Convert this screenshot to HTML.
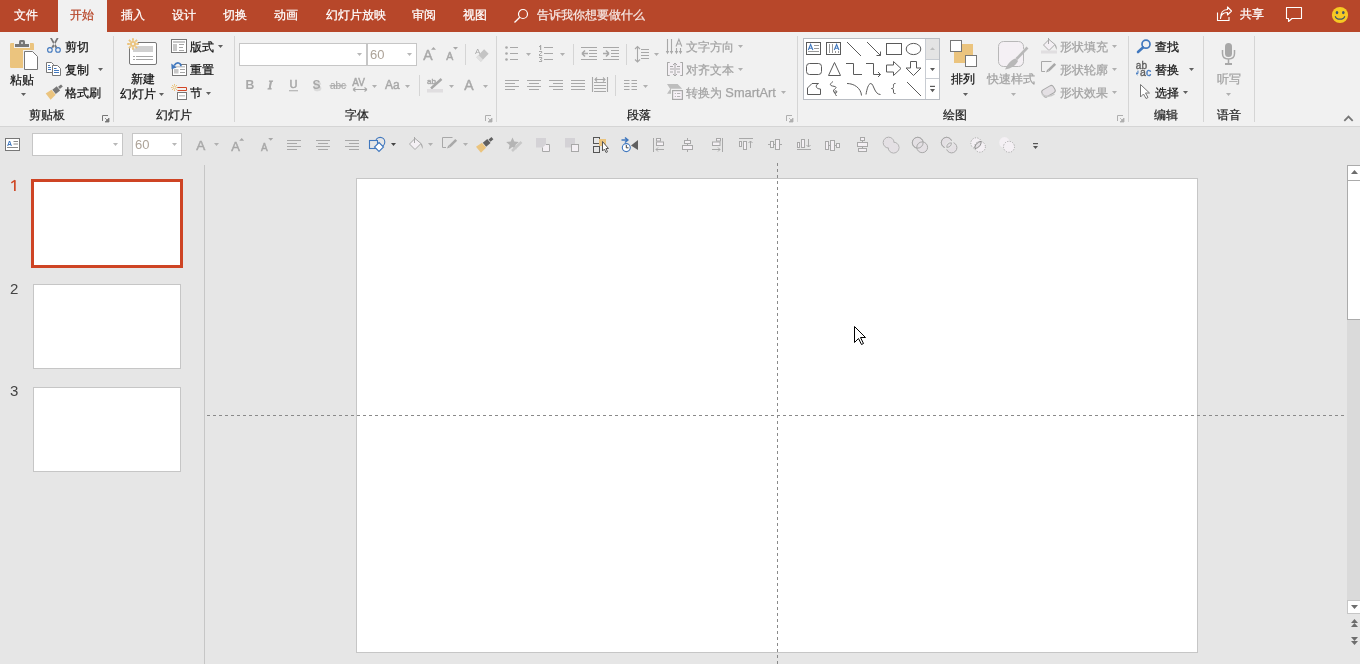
<!DOCTYPE html>
<html><head><meta charset="utf-8"><style>
html,body{margin:0;padding:0;width:1360px;height:664px;overflow:hidden;background:#E6E6E6;font-family:"Liberation Sans",sans-serif;}
.t{position:absolute;line-height:12px;white-space:nowrap;font-size:12px;font-weight:500;will-change:transform;-webkit-text-stroke-width:0.25px}
.r{position:absolute}
.s{position:absolute;overflow:visible}
</style></head><body>
<div class="r" style="left:0px;top:0px;width:1360px;height:32px;background:#B7472A;"></div>
<div class="r" style="left:58px;top:0px;width:49px;height:32px;background:#F1F1F1;"></div>
<div class="t" style="left:14px;top:9px;color:#FFFFFF;font-size:12px;">文件</div>
<div class="t" style="left:70px;top:9px;color:#B7472A;font-size:12px;">开始</div>
<div class="t" style="left:121px;top:9px;color:#FFFFFF;font-size:12px;">插入</div>
<div class="t" style="left:172px;top:9px;color:#FFFFFF;font-size:12px;">设计</div>
<div class="t" style="left:223px;top:9px;color:#FFFFFF;font-size:12px;">切换</div>
<div class="t" style="left:274px;top:9px;color:#FFFFFF;font-size:12px;">动画</div>
<div class="t" style="left:326px;top:9px;color:#FFFFFF;font-size:12px;">幻灯片放映</div>
<div class="t" style="left:412px;top:9px;color:#FFFFFF;font-size:12px;">审阅</div>
<div class="t" style="left:463px;top:9px;color:#FFFFFF;font-size:12px;">视图</div>
<div class="t" style="left:537px;top:9px;color:#F6E6E1;font-size:12px;">告诉我你想要做什么</div>
<svg class="s" style="left:513px;top:8px;" width="16" height="16" viewBox="0 0 16 16"><circle cx="10" cy="6" r="4.5" fill="none" stroke="#fff" stroke-width="1.2"/><path d="M6.8 9.2L1.5 14.5" stroke="#fff" stroke-width="1.3"/></svg>
<svg class="s" style="left:1216px;top:6px;" width="17" height="16" viewBox="0 0 17 16"><path d="M1.5 6.5V14.5H13V11" fill="none" stroke="#fff" stroke-width="1.1"/><path d="M4.5 12.5C5 8 8 6.5 11.5 6.5V9L15.5 5L11.5 1V3.5C7 3.5 4.5 7 4.5 12.5Z" fill="none" stroke="#fff" stroke-width="1.1" stroke-linejoin="round"/></svg>
<div class="t" style="left:1240px;top:8px;color:#FFFFFF;font-size:12px;">共享</div>
<svg class="s" style="left:1285px;top:6px;" width="18" height="17" viewBox="0 0 18 17"><path d="M1.5 1.5H16.5V12.5H7L3.5 15.5V12.5H1.5Z" fill="none" stroke="#fff" stroke-width="1.1" stroke-linejoin="round"/></svg>
<svg class="s" style="left:1331px;top:6px;" width="18" height="18" viewBox="0 0 18 18"><circle cx="9" cy="9" r="8.1" fill="#F6C923"/><ellipse cx="6" cy="6.6" rx="1.3" ry="1.7" fill="#3f5470"/><ellipse cx="12.3" cy="6.6" rx="1.3" ry="1.7" fill="#3f5470"/><path d="M4.2 10.2C5.5 14.2 12.5 14.2 13.8 10.2" fill="none" stroke="#3f5470" stroke-width="1.2"/></svg>
<div class="r" style="left:0px;top:32px;width:1360px;height:94px;background:#F1F1F1;"></div>
<div class="r" style="left:0px;top:126px;width:1360px;height:1px;background:#D5D5D5;"></div>
<div class="r" style="left:113px;top:36px;width:1px;height:86px;background:#D5D5D5;"></div>
<div class="r" style="left:234px;top:36px;width:1px;height:86px;background:#D5D5D5;"></div>
<div class="r" style="left:496px;top:36px;width:1px;height:86px;background:#D5D5D5;"></div>
<div class="r" style="left:797px;top:36px;width:1px;height:86px;background:#D5D5D5;"></div>
<div class="r" style="left:1128px;top:36px;width:1px;height:86px;background:#D5D5D5;"></div>
<div class="r" style="left:1203px;top:36px;width:1px;height:86px;background:#D5D5D5;"></div>
<div class="r" style="left:1254px;top:36px;width:1px;height:86px;background:#D5D5D5;"></div>
<div class="t" style="left:10px;top:74px;color:#141414;font-size:12px;">粘贴</div>
<svg class="s" style="left:21px;top:93px;" width="5" height="3" viewBox="0 0 5 3"><path d="M0 0H5L2.5 3Z" fill="#606060"/></svg>
<div class="t" style="left:65px;top:41px;color:#141414;font-size:12px;">剪切</div>
<div class="t" style="left:65px;top:64px;color:#141414;font-size:12px;">复制</div>
<svg class="s" style="left:98px;top:68px;" width="5" height="3" viewBox="0 0 5 3"><path d="M0 0H5L2.5 3Z" fill="#606060"/></svg>
<div class="t" style="left:65px;top:87px;color:#141414;font-size:12px;">格式刷</div>
<div class="t" style="left:29px;top:109px;color:#262626;font-size:12px;">剪贴板</div>
<div class="t" style="left:131px;top:73px;color:#141414;font-size:12px;">新建</div>
<div class="t" style="left:120px;top:88px;color:#141414;font-size:12px;">幻灯片</div>
<svg class="s" style="left:159px;top:93px;" width="5" height="3" viewBox="0 0 5 3"><path d="M0 0H5L2.5 3Z" fill="#606060"/></svg>
<div class="t" style="left:190px;top:41px;color:#141414;font-size:12px;">版式</div>
<svg class="s" style="left:218px;top:45px;" width="5" height="3" viewBox="0 0 5 3"><path d="M0 0H5L2.5 3Z" fill="#606060"/></svg>
<div class="t" style="left:190px;top:64px;color:#141414;font-size:12px;">重置</div>
<div class="t" style="left:190px;top:87px;color:#141414;font-size:12px;">节</div>
<svg class="s" style="left:206px;top:92px;" width="5" height="3" viewBox="0 0 5 3"><path d="M0 0H5L2.5 3Z" fill="#606060"/></svg>
<div class="t" style="left:156px;top:109px;color:#262626;font-size:12px;">幻灯片</div>
<div class="r" style="left:239px;top:43px;width:128px;height:23px;background:#FFFFFF;box-sizing:border-box;border:1px solid #C6C6C6"></div>
<div class="r" style="left:367px;top:43px;width:50px;height:23px;background:#FFFFFF;box-sizing:border-box;border:1px solid #C6C6C6"></div>
<svg class="s" style="left:357px;top:53px;" width="5" height="3" viewBox="0 0 5 3"><path d="M0 0H5L2.5 3Z" fill="#B8B8B8"/></svg>
<svg class="s" style="left:407px;top:53px;" width="5" height="3" viewBox="0 0 5 3"><path d="M0 0H5L2.5 3Z" fill="#B8B8B8"/></svg>
<div class="t" style="left:370px;top:49px;color:#ADA398;font-size:13px;-webkit-text-stroke-width:0">60</div>
<div class="t" style="left:345px;top:109px;color:#262626;font-size:12px;">字体</div>
<div class="t" style="left:627px;top:109px;color:#262626;font-size:12px;">段落</div>
<div class="t" style="left:686px;top:41px;color:#A3A3A3;font-size:12px;">文字方向</div>
<svg class="s" style="left:738px;top:45px;" width="5" height="3" viewBox="0 0 5 3"><path d="M0 0H5L2.5 3Z" fill="#B0B0B0"/></svg>
<div class="t" style="left:686px;top:64px;color:#A3A3A3;font-size:12px;">对齐文本</div>
<svg class="s" style="left:738px;top:68px;" width="5" height="3" viewBox="0 0 5 3"><path d="M0 0H5L2.5 3Z" fill="#B0B0B0"/></svg>
<div class="t" style="left:686px;top:87px;color:#A3A3A3;font-size:12px;">转换为 <span style="font-size:12.8px">SmartArt</span></div>
<svg class="s" style="left:781px;top:91px;" width="5" height="3" viewBox="0 0 5 3"><path d="M0 0H5L2.5 3Z" fill="#B0B0B0"/></svg>
<div class="r" style="left:803px;top:38px;width:137px;height:62px;background:#FFFFFF;box-sizing:border-box;border:1px solid #B9BDC3"></div>
<div class="t" style="left:951px;top:73px;color:#141414;font-size:12px;">排列</div>
<svg class="s" style="left:963px;top:93px;" width="5" height="3" viewBox="0 0 5 3"><path d="M0 0H5L2.5 3Z" fill="#606060"/></svg>
<div class="t" style="left:987px;top:73px;color:#A3A3A3;font-size:12px;">快速样式</div>
<svg class="s" style="left:1011px;top:93px;" width="5" height="3" viewBox="0 0 5 3"><path d="M0 0H5L2.5 3Z" fill="#B0B0B0"/></svg>
<div class="t" style="left:1060px;top:41px;color:#A3A3A3;font-size:12px;">形状填充</div>
<svg class="s" style="left:1112px;top:45px;" width="5" height="3" viewBox="0 0 5 3"><path d="M0 0H5L2.5 3Z" fill="#B0B0B0"/></svg>
<div class="t" style="left:1060px;top:64px;color:#A3A3A3;font-size:12px;">形状轮廓</div>
<svg class="s" style="left:1112px;top:68px;" width="5" height="3" viewBox="0 0 5 3"><path d="M0 0H5L2.5 3Z" fill="#B0B0B0"/></svg>
<div class="t" style="left:1060px;top:87px;color:#A3A3A3;font-size:12px;">形状效果</div>
<svg class="s" style="left:1112px;top:91px;" width="5" height="3" viewBox="0 0 5 3"><path d="M0 0H5L2.5 3Z" fill="#B0B0B0"/></svg>
<div class="t" style="left:943px;top:109px;color:#262626;font-size:12px;">绘图</div>
<div class="t" style="left:1155px;top:41px;color:#141414;font-size:12px;">查找</div>
<div class="t" style="left:1155px;top:64px;color:#141414;font-size:12px;">替换</div>
<svg class="s" style="left:1189px;top:68px;" width="5" height="3" viewBox="0 0 5 3"><path d="M0 0H5L2.5 3Z" fill="#606060"/></svg>
<div class="t" style="left:1155px;top:87px;color:#141414;font-size:12px;">选择</div>
<svg class="s" style="left:1183px;top:91px;" width="5" height="3" viewBox="0 0 5 3"><path d="M0 0H5L2.5 3Z" fill="#606060"/></svg>
<div class="t" style="left:1154px;top:109px;color:#262626;font-size:12px;">编辑</div>
<div class="t" style="left:1217px;top:73px;color:#A3A3A3;font-size:12px;">听写</div>
<svg class="s" style="left:1226px;top:93px;" width="5" height="3" viewBox="0 0 5 3"><path d="M0 0H5L2.5 3Z" fill="#B0B0B0"/></svg>
<div class="t" style="left:1217px;top:109px;color:#262626;font-size:12px;">语音</div>
<div class="r" style="left:465px;top:44px;width:1px;height:21px;background:#D5D5D5;"></div>
<div class="r" style="left:419px;top:75px;width:1px;height:21px;background:#D5D5D5;"></div>
<div class="r" style="left:573px;top:44px;width:1px;height:21px;background:#D5D5D5;"></div>
<div class="r" style="left:626px;top:44px;width:1px;height:21px;background:#D5D5D5;"></div>
<div class="r" style="left:615px;top:75px;width:1px;height:21px;background:#D5D5D5;"></div>
<svg class="s" style="left:372px;top:85px;" width="5" height="3" viewBox="0 0 5 3"><path d="M0 0H5L2.5 3Z" fill="#B0B0B0"/></svg>
<svg class="s" style="left:405px;top:85px;" width="5" height="3" viewBox="0 0 5 3"><path d="M0 0H5L2.5 3Z" fill="#B0B0B0"/></svg>
<svg class="s" style="left:449px;top:85px;" width="5" height="3" viewBox="0 0 5 3"><path d="M0 0H5L2.5 3Z" fill="#B0B0B0"/></svg>
<svg class="s" style="left:483px;top:85px;" width="5" height="3" viewBox="0 0 5 3"><path d="M0 0H5L2.5 3Z" fill="#B0B0B0"/></svg>
<svg class="s" style="left:526px;top:53px;" width="5" height="3" viewBox="0 0 5 3"><path d="M0 0H5L2.5 3Z" fill="#B0B0B0"/></svg>
<svg class="s" style="left:560px;top:53px;" width="5" height="3" viewBox="0 0 5 3"><path d="M0 0H5L2.5 3Z" fill="#B0B0B0"/></svg>
<svg class="s" style="left:654px;top:53px;" width="5" height="3" viewBox="0 0 5 3"><path d="M0 0H5L2.5 3Z" fill="#B0B0B0"/></svg>
<svg class="s" style="left:643px;top:85px;" width="5" height="3" viewBox="0 0 5 3"><path d="M0 0H5L2.5 3Z" fill="#B0B0B0"/></svg>
<svg class="s" style="left:0;top:0" width="1360" height="166" viewBox="0 0 1360 166"><rect x="10" y="43" width="24" height="25" rx="1.2" fill="#EBC47E"/><rect x="14" y="43" width="16" height="5" fill="#F1F1F1"/><rect x="15" y="44" width="14" height="3" fill="#777777"/><rect x="19" y="40" width="6" height="5" rx="1.5" fill="#777777"/><circle cx="22" cy="43" r="0.9" fill="#F1F1F1"/><rect x="23" y="50" width="16" height="21" fill="#F1F1F1"/><path d="M24.5 51.5H32.5L37.5 56.5V69.5H24.5Z" fill="#fff" stroke="#777777" stroke-width="1"/><path d="M50 38L51.9 38L57.4 47.6L55.4 47.9ZM58.6 38L56.7 38L51.2 47.6L53.2 47.9Z" fill="#777777"/><circle cx="49.9" cy="49.9" r="2.3" fill="#F1F1F1" stroke="#4178BE" stroke-width="1.1"/><circle cx="58" cy="49.9" r="2.3" fill="#F1F1F1" stroke="#4178BE" stroke-width="1.1"/><path d="M46.5 62.5H51.5L53.5 64.5V72.5H46.5Z" fill="#fff" stroke="#777777"/><path d="M48 65.5H50M48 67.5H51M48 69.5H51" stroke="#4178BE"/><path d="M52.5 65.5H57.5L60.5 68.5V75.5H52.5Z" fill="#fff" stroke="#777777"/><path d="M54 68.5H56.5M54 70.5H59M54 72.5H59" stroke="#4178BE"/><g transform="translate(53.6 92.2) rotate(-39)"><path d="M-7 -3.9L0 -3.3V3.3L-7 3.9Z" fill="#EBC47E"/><rect x="0.6" y="-2.7" width="5.6" height="5.4" fill="#777777"/><rect x="6.9" y="-1.4" width="3.8" height="2.8" fill="#777777"/></g><path d="M102.5 121V115.5H108" fill="none" stroke="#777777" stroke-width="1"/><path d="M105 118L108 121M109 118V122H105Z" fill="#777777" stroke="#777777" stroke-width="0.8"/><path d="M485.5 121V115.5H491" fill="none" stroke="#AFAFAF" stroke-width="1"/><path d="M488 118L491 121M492 118V122H488Z" fill="#AFAFAF" stroke="#AFAFAF" stroke-width="0.8"/><path d="M786.5 121V115.5H792" fill="none" stroke="#AFAFAF" stroke-width="1"/><path d="M789 118L792 121M793 118V122H789Z" fill="#AFAFAF" stroke="#AFAFAF" stroke-width="0.8"/><path d="M1117.5 121V115.5H1123" fill="none" stroke="#AFAFAF" stroke-width="1"/><path d="M1120 118L1123 121M1124 118V122H1120Z" fill="#AFAFAF" stroke="#AFAFAF" stroke-width="0.8"/><rect x="129.5" y="42.5" width="27" height="22" rx="1.5" fill="#fff" stroke="#777777"/><rect x="133" y="46" width="20" height="6" fill="#D0D0D0"/><path d="M133 56.5H135M136 56.5H153M133 59.5H135M136 59.5H153" stroke="#A6A6A6"/><circle cx="133" cy="44" r="5" fill="#F1F1F1"/><g stroke="#EBC47E" stroke-width="1.9" fill="none"><circle cx="133" cy="44" r="2.1"/><path d="M133 38.2V40.8M133 47.2V49.8M127.2 44H129.8M136.2 44H138.8M128.9 39.9L130.7 41.7M135.3 46.3L137.1 48.1M137.1 39.9L135.3 41.7M130.7 46.3L128.9 48.1"/></g><rect x="171.5" y="39.5" width="15" height="13" fill="#fff" stroke="#777777"/><rect x="173" y="41" width="12" height="2" fill="#C8C8C8"/><rect x="173" y="44" width="4" height="7" fill="#C8C8C8"/><path d="M179 44.5H184M179 47.5H183M179 50.5H184" stroke="#A6A6A6"/><rect x="172.5" y="64.5" width="14" height="11" fill="#fff" stroke="#777777"/><rect x="174" y="66" width="11" height="1.5" fill="#C8C8C8"/><rect x="174" y="69" width="4.5" height="4.5" fill="#C8C8C8"/><path d="M180 69.5H185M180 72.5H185" stroke="#A6A6A6"/><path d="M171 61H181V66H171Z" fill="#F1F1F1"/><path d="M181 66.2C180.8 62.6 176.8 61.6 174.2 65.4" fill="none" stroke="#4178BE" stroke-width="1.7"/><path d="M171.3 63.6L171.6 69.2L176.6 67.4Z" fill="#4178BE"/><g stroke="#EBC47E" stroke-width="1" fill="none"><circle cx="174.5" cy="87.5" r="1.4"/><path d="M174.5 84V85.5M174.5 89.5V91M171 87.5H172.5M176.5 87.5H178M172 85L173 86M176 89L177 90M177 85L176 86M173 89L172 90"/></g><path d="M177.5 87.5H186.5V90.5H177.5" fill="none" stroke="#D24726"/><rect x="177.5" y="92.5" width="9" height="7" fill="#fff" stroke="#777777"/><rect x="179" y="95" width="6" height="1.5" fill="#C8C8C8"/><g fill="#A8A8A8" stroke="#A8A8A8" stroke-width="0.45" font-family="Liberation Sans" ><text x="423.3" y="60" font-size="14">A</text><text x="446.2" y="60" font-size="10.5">A</text><text x="245.5" y="89" font-size="12.2" font-weight="bold" stroke-width="0">B</text><text x="268" y="89" font-size="12.5" font-family="Liberation Serif" font-style="italic" stroke-width="0.8">I</text><text x="289.6" y="88" font-size="11" stroke-width="0.5">U</text><text x="313.4" y="90.6" font-size="12" font-weight="bold" fill="#DADADA" stroke="#DADADA" stroke-width="0.6">S</text><text x="312.4" y="89" font-size="12" font-weight="bold" stroke-width="0">S</text><text x="330" y="89" font-size="10" stroke-width="0.15">abc</text><text x="352.3" y="86" font-size="10">AV</text><text x="385" y="89" font-size="12">Aa</text><text x="427" y="84" font-size="8">ab</text><text x="464.2" y="90" font-size="14">A</text></g><path d="M431 49.8L433.5 47L436 49.8Z M453 47H458L455.5 49.8Z" fill="#A8A8A8"/><path d="M289 90.8H298M329.5 85.8H346.5" stroke="#A8A8A8" stroke-width="1.1"/><path d="M353 89.5H367M353 89.5L355.5 87.5M353 89.5L355.5 91.5M367 89.5L364.5 87.5M367 89.5L364.5 91.5" stroke="#A8A8A8" fill="none" stroke-width="1.1"/><text x="475" y="54" font-size="8" fill="#A8A8A8" font-family="Liberation Sans">A</text><g transform="translate(482.5 55.5) rotate(-45)"><rect x="-5.5" y="-3.2" width="11" height="6.4" fill="#C4C4C4"/><rect x="-5.5" y="-3.2" width="3" height="6.4" fill="#E0E0E0"/></g><path d="M431 88.5L441.5 79" stroke="#A8A8A8" stroke-width="2.4"/><rect x="427" y="89" width="16" height="3.5" fill="#E0DEE0"/><path d="M465.5 90.5H474.5" stroke="#E0DEE0" stroke-width="0"/><g fill="#A8A8A8"><circle cx="506.5" cy="47.5" r="1.3"/><circle cx="506.5" cy="53.5" r="1.3"/><circle cx="506.5" cy="59.5" r="1.3"/></g><path d="M510 47.5H518M510 53.5H518M510 59.5H518M544 47.5H553M544 53.5H553M544 59.5H553" stroke="#A8A8A8" stroke-width="1.2"/><path d="M540 45h1.2v5H540zM539 46h1v1h-1zM539 51h3v1h-3zM541.2 51.5h1v1.5h-1zM540.2 53h1v1h-1zM539 54h1v1h-1zM539 55h3.2v1H539zM539 57h3v1h-3zM541.2 57.5h1v1.5h-1zM540 59h1.5v1H540zM541.2 60h1v1.2h-1zM539 61h3v1h-3z" fill="#A8A8A8"/><path d="M581 47.5H597M589 50.5H597M589 53.5H597M589 56.5H597M581 59.5H597" stroke="#A8A8A8" stroke-width="1.1"/><path d="M582 53.5H588M582 53.5L585 50.5M582 53.5L585 56.5" stroke="#A8A8A8" stroke-width="1.6" fill="none"/><path d="M603 47.5H619M611 50.5H619M611 53.5H619M611 56.5H619M603 59.5H619" stroke="#A8A8A8" stroke-width="1.1"/><path d="M603 53.5H609M609 53.5L606 50.5M609 53.5L606 56.5" stroke="#A8A8A8" stroke-width="1.6" fill="none"/><path d="M637.5 46.5V62M635 49L637.5 46.5L640 49M635 59.5L637.5 62L640 59.5" stroke="#A8A8A8" stroke-width="1.1" fill="none"/><path d="M641 49.5H649M641 52.5H649M641 55.5H649M641 58.5H649" stroke="#A8A8A8" stroke-width="1.1"/><path d="M505 80.5H519M505 83.5H515M505 86.5H519M505 89.5H515" stroke="#A8A8A8" stroke-width="1.1"/><path d="M527 80.5H541M529 83.5H539M527 86.5H541M529 89.5H539" stroke="#A8A8A8" stroke-width="1.1"/><path d="M549 80.5H563M553 83.5H563M549 86.5H563M553 89.5H563" stroke="#A8A8A8" stroke-width="1.1"/><path d="M571 80.5H585M571 83.5H585M571 86.5H585M571 89.5H585" stroke="#A8A8A8" stroke-width="1.1"/><path d="M592.5 77V92M607.5 77V92M594 82.5H606M594 85.5H606M594 88.5H606M594 91.5H606" stroke="#A8A8A8" stroke-width="1.1"/><path d="M595 79.5H605M597 77.5L595 79.5L597 81.5M603 77.5L605 79.5L603 81.5" stroke="#A8A8A8" stroke-width="1.1" fill="none"/><path d="M624 80.5H629.5M631.5 80.5H637M624 83.5H629.5M631.5 83.5H637M624 86.5H629.5M631.5 86.5H637M624 89.5H629.5M631.5 89.5H637" stroke="#A8A8A8" stroke-width="1.1"/><path d="M667.5 39V53M671.5 39V53M676.5 48V53M680.5 48V53" stroke="#A8A8A8" stroke-width="1.1"/><path d="M665.8 51L667.5 54.2L669.2 51ZM669.8 51L671.5 54.2L673.2 51ZM674.8 51L676.5 54.2L678.2 51ZM678.8 51L680.5 54.2L682.2 51Z" fill="#A8A8A8"/><path d="M676 46.5L678.9 39.2L681.8 46.5M677 44H680.8" fill="none" stroke="#A8A8A8" stroke-width="1.1"/><path d="M669.5 62.5H667.5V75.5H669.5M680.5 62.5H682.5V75.5H680.5" stroke="#A8A8A8" fill="none"/><rect x="668" y="63" width="14" height="12" fill="#F4F0F4"/><path d="M669.5 62.5H667.5V75.5H669.5M680.5 62.5H682.5V75.5H680.5" stroke="#A8A8A8" fill="none"/><path d="M675 63V68M675 70V76M673 65L675 63L677 65M673 74L675 76L677 74M670 69H680M670 66.5H673M677 66.5H680M670 72H673M677 72H680" stroke="#A8A8A8" fill="none"/><path d="M667 84H677.6L682.2 88.8H671V93.8H667L670.2 89Z" fill="#BEBEBE"/><rect x="671" y="89" width="13" height="12" fill="#F1F1F1"/><rect x="672.6" y="90.6" width="9.8" height="8.8" fill="#F6F0F6" stroke="#A8A8A8" stroke-width="1.2"/><path d="M674.8 93.5H675.9M677 93.5H680.3M674.8 96.5H675.9M677 96.5H680.3" stroke="#B4B4B4" stroke-width="1"/><rect x="925" y="39" width="14" height="20" fill="#E4E4E4"/><path d="M925.5 39V99M925 59.5H939M925 78.5H939" stroke="#C8CCD2" stroke-width="1"/><path d="M930 50H935L932.5 47.3Z" fill="#BDBDBD"/><path d="M930 68H935L932.5 71Z M930 89H935L932.5 92.3Z" fill="#5a5a5a"/><rect x="930" y="85.8" width="5" height="1.2" fill="#5a5a5a"/><rect x="806.5" y="42.5" width="14" height="12" fill="none" stroke="#5a5a5a" stroke-width="1"/><path d="M808.3 50L810.6 44.5L812.9 50M809.2 48.2H812" fill="none" stroke="#4178BE" stroke-width="1.1"/><path d="M814 45.5H819M814 48.5H819M808 51.5H819" stroke="#9a9a9a"/><rect x="826.5" y="42.5" width="14" height="12" fill="none" stroke="#5a5a5a" stroke-width="1"/><path d="M829.5 44V53M832.5 44V53M835.5 51V53M838.5 51V53" stroke="#9a9a9a"/><path d="M834.3 50L836.6 44.5L838.9 50M835.2 48.2H838" fill="none" stroke="#4178BE" stroke-width="1.1"/><path d="M847 42L861 56" fill="none" stroke="#5a5a5a" stroke-width="1"/><path d="M867 42L880.5 55.5M876.5 55.5H880.5V51.5" fill="none" stroke="#5a5a5a" stroke-width="1"/><rect x="886.5" y="43.5" width="15" height="11" fill="none" stroke="#5a5a5a" stroke-width="1"/><ellipse cx="913.5" cy="49" rx="7.3" ry="5.6" fill="none" stroke="#5a5a5a" stroke-width="1"/><rect x="806.5" y="63.5" width="15" height="11" rx="3" fill="none" stroke="#5a5a5a" stroke-width="1"/><path d="M834.5 62.5L828.5 75.5H840.5Z" fill="none" stroke="#5a5a5a" stroke-width="1"/><path d="M846 63.5H853.5V74.5H862" fill="none" stroke="#5a5a5a" stroke-width="1"/><path d="M866 63.5H873.5V74.5H880.5M878 72L880.5 74.5L878 77" fill="none" stroke="#5a5a5a" stroke-width="1"/><path d="M886.5 65H893.5V61.5L901 68.5L893.5 75.5V72H886.5Z" fill="none" stroke="#5a5a5a" stroke-width="1"/><path d="M910.5 61.5H916.5V68H921L913.5 75.5L906 68H910.5Z" fill="none" stroke="#5a5a5a" stroke-width="1"/><path d="M807.5 94.5V88L812 83.5H818.5C815 85 815.5 89 820.5 89V94.5Z" fill="none" stroke="#5a5a5a" stroke-width="1" stroke-linejoin="round"/><path d="M833 81.5C831 83 829.5 84.5 831 85.5C832.5 86.5 836 86 836 87.5C836 89 833 89 833.5 91.5C834 93.5 837 93.5 836.8 91.8C836.6 90 834.5 90.5 834.8 92.5C835 94 836 95 836.5 96" fill="none" stroke="#5a5a5a" stroke-width="1"/><path d="M847 83.5C854 83.5 861 88 861.5 95.5" fill="none" stroke="#5a5a5a" stroke-width="1"/><path d="M866 94.5C866.8 89.5 868.3 83.5 870.8 83.5C873.8 83.5 874.2 94.5 880.5 94.5" fill="none" stroke="#5a5a5a" stroke-width="1"/><path d="M895.5 83.5C893 83.5 893.5 84.5 893.5 86.5C893.5 88 893 88.5 891.5 88.5C893 88.5 893.5 89 893.5 91C893.5 93 893 93.5 895.5 93.5" fill="none" stroke="#5a5a5a" stroke-width="1"/><path d="M907 82L921 96" fill="none" stroke="#5a5a5a" stroke-width="1"/><rect x="954" y="44" width="19" height="19" fill="#EBC47E"/><rect x="950.5" y="40.5" width="11" height="11" fill="#fff" stroke="#777777"/><rect x="965.5" y="55.5" width="11" height="11" fill="#fff" stroke="#777777"/><rect x="998.5" y="41.5" width="25" height="25" rx="5" fill="#F4F0F4" stroke="#B8B8B8"/><path d="M1020 56L1027.5 48.5V45L1016 56.5" fill="#F1F1F1"/><path d="M1027.5 47.5L1016.5 59" stroke="#B8B8B8" stroke-width="2.6"/><path d="M1016 58.5C1012 59 1008 63 1005 69.5C1011 68.5 1016 65.5 1018 61Z" fill="#B8B8B8"/><path d="M1049 39.5L1043.5 45L1049 50.5L1055 44.5Z" fill="#F4F0F4" stroke="#A8A8A8"/><path d="M1048.5 38V44" stroke="#A8A8A8"/><path d="M1054 44C1057 45 1057 48 1056.5 50L1055 46Z" fill="#A8A8A8"/><rect x="1041" y="50.5" width="16" height="3" fill="#E0DEE0"/><path d="M1051.5 61.5H1041.5V71.5H1045" fill="none" stroke="#A8A8A8"/><path d="M1055.2 63.8L1048.6 70.4" stroke="#A8A8A8" stroke-width="2.6"/><path d="M1047.3 69.2L1046 72.5L1049.3 71.3Z" fill="#A8A8A8"/><g transform="translate(1048.5 91.3) rotate(-30)"><rect x="-6.5" y="-4" width="13" height="8" rx="2.5" fill="#E4E0E4" stroke="#A8A8A8"/></g><path d="M1042 93.5C1043 96.5 1050 97.5 1054.5 94" stroke="#C8C8C8" stroke-width="1.5" fill="none"/><circle cx="1146" cy="44.2" r="4" fill="none" stroke="#4178BE" stroke-width="1.7"/><path d="M1143 47.5L1138 52" stroke="#4178BE" stroke-width="2.6" stroke-linecap="round"/><g font-family="Liberation Sans" font-size="10.5" stroke-width="0.35"><text x="1135.8" y="68.8" fill="#5f5f5f" stroke="#5f5f5f" textLength="11.2" lengthAdjust="spacingAndGlyphs">ab</text><text x="1140" y="75.8" fill="#5f5f5f" stroke="#5f5f5f">a</text><text x="1146" y="75.8" fill="#4178BE" stroke="#4178BE">c</text></g><path d="M1138 70.5V73.5H1136.2M1137.6 72L1136 73.5L1137.6 75" stroke="#4178BE" fill="none" stroke-width="0.9"/><path d="M1140.5 84.5V97L1143.5 94L1146 98.5L1148 97.5L1145.5 93H1149.5Z" fill="#fff" stroke="#777777" stroke-linejoin="round"/><rect x="1225" y="43" width="7" height="14" rx="3.5" fill="#A8A8A8"/><path d="M1222.5 50V53.5C1222.5 57 1225 59 1228.5 59C1232 59 1234.5 57 1234.5 53.5V50M1228.5 59V63.5" fill="none" stroke="#A8A8A8" stroke-width="1.5"/><rect x="1225" y="63" width="7" height="2" fill="#A8A8A8"/><path d="M1344.3 120.8L1348.5 116.6L1352.7 120.8" fill="none" stroke="#777777" stroke-width="1.8"/></svg>
<div class="r" style="left:0px;top:127px;width:1360px;height:537px;background:#E6E6E6;"></div>
<div class="r" style="left:32px;top:133px;width:91px;height:23px;background:#FFFFFF;box-sizing:border-box;border:1px solid #C6C6C6"></div>
<div class="r" style="left:132px;top:133px;width:50px;height:23px;background:#FFFFFF;box-sizing:border-box;border:1px solid #C6C6C6"></div>
<svg class="s" style="left:113px;top:143px;" width="5" height="3" viewBox="0 0 5 3"><path d="M0 0H5L2.5 3Z" fill="#B8B8B8"/></svg>
<svg class="s" style="left:172px;top:143px;" width="5" height="3" viewBox="0 0 5 3"><path d="M0 0H5L2.5 3Z" fill="#B8B8B8"/></svg>
<div class="t" style="left:135px;top:139px;color:#ADA398;font-size:13px;-webkit-text-stroke-width:0">60</div>
<svg class="s" style="left:0;top:0" width="1360" height="166" viewBox="0 0 1360 166"><rect x="5.5" y="138.5" width="14" height="12" fill="#fff" stroke="#777777"/><text x="7" y="146" font-size="7" font-weight="bold" fill="#4178BE" font-family="Liberation Sans">A</text><path d="M13.5 141.5H18M13.5 144H18M7 147.5H18" stroke="#8a8a8a"/><g fill="#A8A8A8" stroke="#A8A8A8" stroke-width="0.45" font-family="Liberation Sans"><text x="196.2" y="150" font-size="13.5">A</text><text x="231.3" y="151" font-size="13">A</text><text x="261" y="151" font-size="10">A</text></g><path d="M239.2 140.8L241.7 138L244.2 140.8ZM268.2 138H273.2L270.7 140.8Z" fill="#A8A8A8"/><path d="M287 140.5H301M287 143.5H297M287 146.5H301M287 149.5H297" stroke="#A8A8A8" stroke-width="1.1"/><path d="M316 140.5H330M318 143.5H328M316 146.5H330M318 149.5H328" stroke="#A8A8A8" stroke-width="1.1"/><path d="M345 140.5H359M349 143.5H359M345 146.5H359M349 149.5H359" stroke="#A8A8A8" stroke-width="1.1"/><circle cx="380.2" cy="142" r="4.6" fill="none" stroke="#4178BE" stroke-width="1.1"/><rect x="369.5" y="140.5" width="8" height="8" fill="#E6E6E6" stroke="#4178BE" stroke-width="1.1"/><path d="M379 142.5L383.5 147L379 151.5L374.5 147Z" fill="#fff" stroke="#4178BE" stroke-width="1.1"/><path d="M391 143H396L393.5 146Z" fill="#444"/><path d="M415 138.5L409.5 144L415 149.5L421 143.5Z" fill="#F4F0F4" stroke="#A8A8A8"/><path d="M414.5 137V143" stroke="#A8A8A8"/><path d="M420 143C423 144 423 147 422.5 149L421 145Z" fill="#A8A8A8"/><path d="M452.5 137.5H442.5V147.5H446" fill="none" stroke="#A8A8A8"/><path d="M456.2 139.8L449.6 146.4" stroke="#A8A8A8" stroke-width="2.6"/><path d="M448.3 145.2L447 148.5L450.3 147.3Z" fill="#A8A8A8"/><g transform="translate(484 145.2) rotate(-40)"><path d="M-7.2 -3.9L0 -3.2V3.2L-7.2 3.9Z" fill="#EBC47E"/><rect x="0.6" y="-2.6" width="5.8" height="5.2" fill="#606060"/><rect x="7.2" y="-1.5" width="3.8" height="3" fill="#606060"/></g><path d="M512.5 137.5L514.3 141.6L518.8 142L515.4 145L516.4 149.4L512.5 147.1L508.6 149.4L509.6 145L506.2 142L510.7 141.6Z" fill="#B4B4B4"/><path d="M512 151L521.5 142" stroke="#C8C8C8" stroke-width="2.6"/><rect x="536" y="138" width="10" height="9.5" fill="#D4D2D6"/><path d="M546 144.5H549.5V151.5H542.5V147.5" fill="#F4F0F4" stroke="#A8A8A8"/><rect x="565" y="138" width="10" height="9.5" fill="#D4D2D6"/><rect x="571.5" y="144.5" width="7" height="7" fill="#F4F0F4" stroke="#A8A8A8"/><rect x="593.5" y="137.5" width="6" height="6" fill="none" stroke="#555"/><rect x="593.5" y="146.5" width="6" height="6" fill="none" stroke="#555"/><rect x="599" y="139" width="7" height="7" fill="#EBC47E"/><path d="M602.5 141.5V151L604.5 149L606 152.5L607.5 151.8L606 148.5H608.5Z" fill="#fff" stroke="#555" stroke-linejoin="round"/><path d="M621.5 140H627.5M625 137.5L627.8 140L625 142.5" stroke="#4178BE" stroke-width="1.6" fill="none"/><circle cx="626.3" cy="147.6" r="4" fill="#fff" stroke="#4178BE" stroke-width="1.1"/><path d="M626.3 145V147.8H628.5" stroke="#444" fill="none"/><path d="M638 140V150L631 145.5Z" fill="#606060"/><path d="M653.5 138V152" stroke="#A8A8A8"/><rect x="656.5" y="138.5" width="4" height="2.5" fill="#F4F0F4" stroke="#A8A8A8"/><rect x="656.5" y="142" width="7" height="3.5" fill="#F4F0F4" stroke="#A8A8A8"/><path d="M656 149.5H664M658 147.5L656 149.5L658 151.5" stroke="#A8A8A8" fill="none"/><path d="M687.5 138V152" stroke="#A8A8A8"/><rect x="684.5" y="140.5" width="6" height="3" fill="#F4F0F4" stroke="#A8A8A8"/><rect x="682.5" y="145.5" width="10" height="4" fill="#F4F0F4" stroke="#A8A8A8"/><path d="M722.5 138V152" stroke="#A8A8A8"/><rect x="716.5" y="138.5" width="4" height="2.5" fill="#F4F0F4" stroke="#A8A8A8"/><rect x="712.5" y="142" width="7.5" height="3.5" fill="#F4F0F4" stroke="#A8A8A8"/><path d="M712 149.5H720M718 147.5L720 149.5L718 151.5" stroke="#A8A8A8" fill="none"/><path d="M739 138.5H753" stroke="#A8A8A8"/><rect x="739.5" y="141.5" width="2" height="5" fill="#F4F0F4" stroke="#A8A8A8"/><rect x="743.5" y="141.5" width="3" height="8" fill="#F4F0F4" stroke="#A8A8A8"/><path d="M750.5 141V148M748.5 143L750.5 141L752.5 143" stroke="#A8A8A8" fill="none"/><path d="M768 144.5H782" stroke="#A8A8A8"/><rect x="770.5" y="141.5" width="3" height="6" fill="#F4F0F4" stroke="#A8A8A8"/><rect x="775.5" y="139.5" width="4" height="10" fill="#F4F0F4" stroke="#A8A8A8"/><path d="M797 149.5H811" stroke="#A8A8A8"/><rect x="797.5" y="142.5" width="2" height="5" fill="#F4F0F4" stroke="#A8A8A8"/><rect x="801.5" y="139.5" width="3" height="8" fill="#F4F0F4" stroke="#A8A8A8"/><path d="M808.5 139V147M806.5 145L808.5 147L810.5 145" stroke="#A8A8A8" fill="none"/><path d="M825 145.5H840" stroke="#A8A8A8"/><rect x="825.5" y="141.5" width="3" height="8" fill="#F4F0F4" stroke="#A8A8A8"/><rect x="830.5" y="140.5" width="4" height="10" fill="#F4F0F4" stroke="#A8A8A8"/><rect x="836.5" y="143.5" width="3" height="4" fill="#F4F0F4" stroke="#A8A8A8"/><path d="M862.5 137V152" stroke="#A8A8A8"/><rect x="860.5" y="137.5" width="4" height="3" fill="#F4F0F4" stroke="#A8A8A8"/><rect x="857.5" y="142.5" width="10" height="4" fill="#F4F0F4" stroke="#A8A8A8"/><rect x="858.5" y="148.5" width="8" height="3" fill="#F4F0F4" stroke="#A8A8A8"/><circle cx="888.6" cy="142.6" r="5.4" fill="#E4E0E4" stroke="#A8A8A8"/><circle cx="893.6" cy="147.6" r="5.4" fill="#E4E0E4" stroke="#A8A8A8"/><circle cx="888.6" cy="142.6" r="4.9" fill="#E4E0E4"/><circle cx="893.6" cy="147.6" r="4.9" fill="#E4E0E4"/><circle cx="917.7" cy="142.7" r="5.4" fill="#E4E0E4" stroke="#A8A8A8"/><circle cx="922.2" cy="147.3" r="5.4" fill="#E4E0E4" stroke="#A8A8A8"/><path d="M917.7 142.7m-5.4 0a5.4 5.4 0 1 0 10.8 0a5.4 5.4 0 1 0 -10.8 0" fill="none" stroke="#A8A8A8"/><circle cx="946.6" cy="142.6" r="5.3" fill="#E4E0E4" stroke="#A8A8A8"/><circle cx="951.6" cy="147.6" r="5.3" fill="#E4E0E4" stroke="#A8A8A8"/><path d="M946.6 142.6m-5.3 0a5.3 5.3 0 1 0 10.6 0a5.3 5.3 0 1 0 -10.6 0" fill="none" stroke="#A8A8A8"/><path d="M945.8 148.4C945.3 145 947.5 141.8 952.4 141.8C952.9 145.2 950.7 148.4 945.8 148.4Z" fill="none" stroke="#E6E6E6" stroke-width="2.2"/><path d="M946.8 147.4C946.6 145 948.2 142.8 951.4 142.8C951.6 145.2 950 147.4 946.8 147.4Z" fill="#E4E0E4" stroke="#A8A8A8" stroke-width="0.9"/><circle cx="976.2" cy="143.2" r="5.4" fill="#F4F0F4" stroke="#A8A8A8" stroke-dasharray="1.2 1.4"/><circle cx="980" cy="146.8" r="5.4" fill="#F4F0F4" stroke="#A8A8A8" stroke-dasharray="1.2 1.4"/><path d="M975 148.5C974.5 145.5 977 142 981 141.5C981.5 144.5 979 148 975 148.5Z" fill="#E4E0E4" stroke="#8a8a8a"/><circle cx="1004.5" cy="142.4" r="5.3" fill="#F4F0F4"/><circle cx="1009" cy="146.8" r="5.5" fill="#F4F0F4" stroke="#A8A8A8" stroke-dasharray="1.2 1.4"/><rect x="1033" y="143" width="5" height="1.2" fill="#555"/><path d="M1033 146H1038L1035.5 149Z" fill="#555"/></svg>
<svg class="s" style="left:214px;top:143px;" width="5" height="3" viewBox="0 0 5 3"><path d="M0 0H5L2.5 3Z" fill="#B0B0B0"/></svg>
<svg class="s" style="left:428px;top:143px;" width="5" height="3" viewBox="0 0 5 3"><path d="M0 0H5L2.5 3Z" fill="#B0B0B0"/></svg>
<svg class="s" style="left:463px;top:143px;" width="5" height="3" viewBox="0 0 5 3"><path d="M0 0H5L2.5 3Z" fill="#B0B0B0"/></svg>
<div class="r" style="left:204px;top:165px;width:1px;height:499px;background:#C6C6C6;"></div>
<div class="r" style="left:31px;top:179px;width:152px;height:89px;background:#FFFFFF;box-sizing:border-box;border:3px solid #CE4424"></div>
<div class="r" style="left:33px;top:284px;width:148px;height:85px;background:#FFFFFF;box-sizing:border-box;border:1px solid #C6C6C6"></div>
<div class="r" style="left:33px;top:387px;width:148px;height:85px;background:#FFFFFF;box-sizing:border-box;border:1px solid #C6C6C6"></div>
<svg class="s" style="left:0px;top:170px;" width="30" height="30" viewBox="0 0 30 30"><path d="M14 10.2H15.7V21H14Z" fill="#CF4A28"/><path d="M11.3 12.8L15 10.4" stroke="#CF4A28" stroke-width="1.4"/></svg>
<div class="t" style="left:10px;top:283px;color:#444;font-size:15px;line-height:12px;-webkit-text-stroke-width:0">2</div>
<div class="t" style="left:10px;top:385px;color:#444;font-size:15px;line-height:12px;-webkit-text-stroke-width:0">3</div>
<div class="r" style="left:356px;top:178px;width:842px;height:475px;background:#FFFFFF;box-sizing:border-box;border:1px solid #C6C6C6"></div>
<div class="r" style="left:777px;top:163px;width:1px;height:501px;background:repeating-linear-gradient(to bottom,#8a8a8a 0 3px,transparent 3px 6px)"></div>
<div class="r" style="left:207px;top:415px;width:1137px;height:1px;background:repeating-linear-gradient(to right,#8a8a8a 0 3px,transparent 3px 6px)"></div>
<div class="r" style="left:1347px;top:165px;width:13px;height:435px;background:#DADADA;"></div>
<div class="r" style="left:1347px;top:165px;width:13px;height:155px;background:#FFFFFF;box-sizing:border-box;border:1px solid #ABABAB;border-right:none"></div>
<div class="r" style="left:1348px;top:180px;width:12px;height:1px;background:#ABABAB;"></div>
<svg class="s" style="left:1351px;top:170px;" width="7" height="4" viewBox="0 0 7 4"><path d="M0 4H7L3.5 0Z" fill="#6d6d6d"/></svg>
<div class="r" style="left:1347px;top:600px;width:13px;height:14px;background:#FFFFFF;box-sizing:border-box;border:1px solid #C6C6C6;border-right:none"></div>
<svg class="s" style="left:1351px;top:605px;" width="7" height="4" viewBox="0 0 7 4"><path d="M0 0H7L3.5 4Z" fill="#6d6d6d"/></svg>
<svg class="s" style="left:1351px;top:619px;" width="7" height="8" viewBox="0 0 7 8"><path d="M0 4H7L3.5 0Z M0 8H7L3.5 4Z" fill="#6d6d6d"/></svg>
<svg class="s" style="left:1351px;top:637px;" width="7" height="8" viewBox="0 0 7 8"><path d="M0 0H7L3.5 4Z M0 4H7L3.5 8Z" fill="#6d6d6d"/></svg>
<svg class="s" style="left:853px;top:325px;" width="14" height="21" viewBox="0 0 14 21"><path d="M1.5 1.5V17.5L5.5 13.5L8.5 19.5L10.5 18.5L7.5 12.5H12.5Z" fill="#fff" stroke="#000" stroke-width="1" stroke-linejoin="miter"/></svg>
</body></html>
